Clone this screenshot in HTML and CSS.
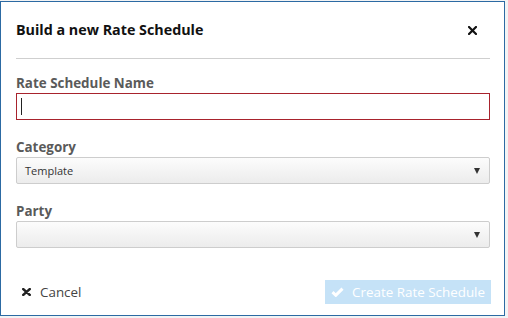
FILE: index.html
```html
<!DOCTYPE html>
<html>

<head>
    <title>Build a new Rate Schedule</title>
    <link rel="stylesheet" href="styles.css">
</head>

<body>
    <div class="modal">
        <!-- header -->
        <div class="modal_header">
            <h1>Build a new Rate Schedule</h1>
            <span class="close">
                <svg width="9" height="9" viewBox="0 0 9 9">
                    <path d="M1 1 L8 8 M8 1 L1 8" stroke="#111" stroke-width="2.2" stroke-linecap="square" />
                </svg>
            </span>
        </div>

        <!-- form -->
        <div class="modal_body">
            <div class="field">
                <label>Rate Schedule Name</label>
                <div class="text_input" contenteditable="true">
                    <span class="caret"></span>
                </div>
            </div>

            <div class="field">
                <label>Category</label>
                <div class="select_box">
                    <span>Template</span>
                    <i class="arrow"></i>
                </div>
            </div>

            <div class="field">
                <label>Party</label>
                <div class="select_box">
                    <span></span>
                    <i class="arrow"></i>
                </div>
            </div>
        </div>

        <!-- footer -->
        <div class="modal_footer">
            <a class="cancel">
                <svg width="9" height="8" viewBox="0 0 9 8">
                    <path d="M1.3 1.1 L7.7 6.9 M7.7 1.1 L1.3 6.9" stroke="#222" stroke-width="2.6" stroke-linecap="round" />
                </svg>
                Cancel
            </a>
            <button class="create" disabled>
                <svg width="13" height="10" viewBox="0 0 13 10">
                    <path d="M1.5 5.2 L4.8 8.3 L11.5 1.6" stroke="#fff" stroke-width="3" fill="none" />
                </svg>
                Create Rate Schedule
            </button>
        </div>
    </div>
</body>

</html>
```

FILE: styles.css
```css
* {
    margin: 0;
    padding: 0;
    box-sizing: border-box;
}

body {
    background-color: #f2f3f4;
    font-family: "Open Sans", "Liberation Sans", sans-serif;
    color: #333;
}

.modal {
    width: 505px;
    height: 315px;
    margin-top: 1px;
    background-color: #fff;
    border: 1px solid #2c6aa3;
    display: flex;
    flex-direction: column;
}

/* header */
.modal_header {
    display: flex;
    align-items: center;
    justify-content: space-between;
    margin: 0 14px 0 15px;
    padding: 18px 13px 18px 0;
    border-bottom: 1px solid #cfcfcf;
}

h1 {
    font-size: 14.3px;
    line-height: 20px;
    font-weight: 700;
    color: #111;
}

.close {
    display: flex;
    margin-top: 1px;
}

/* body */
.modal_body {
    padding: 14px 14px 0 15px;
}

.field {
    margin-bottom: 17px;
}

label {
    display: block;
    font-size: 13.4px;
    line-height: 20px;
    font-weight: 700;
    color: #5a5a5a;
}

.text_input {
    display: flex;
    align-items: center;
    height: 27px;
    padding-left: 4px;
    border: 1px solid #a8232d;
    outline: none;
    background: #fff;
}

.caret {
    width: 1px;
    height: 17px;
    background-color: #222;
}

.select_box {
    height: 27px;
    display: flex;
    align-items: center;
    justify-content: space-between;
    padding: 0 9px 0 8px;
    border: 1px solid #cdcdcd;
    border-radius: 2px;
    background: linear-gradient(#fcfcfc, #ececec);
    font-size: 11px;
    color: #333;
}

.arrow {
    width: 0;
    height: 0;
    border-left: 3.5px solid transparent;
    border-right: 3.5px solid transparent;
    border-top: 6px solid #333;
}

/* footer */
.modal_footer {
    margin-top: auto;
    display: flex;
    align-items: center;
    justify-content: space-between;
    padding: 0 13px 11px 21px;
}

.cancel {
    display: flex;
    align-items: center;
    gap: 9px;
    font-size: 13.4px;
    color: #444;
}

.create {
    display: flex;
    align-items: center;
    gap: 8px;
    height: 24px;
    padding: 0 6px 0 6px;
    border: none;
    background-color: #c5e2f7;
    font-family: "Open Sans", "Liberation Sans", sans-serif;
    font-size: 13.4px;
    color: #fff;
}
```
